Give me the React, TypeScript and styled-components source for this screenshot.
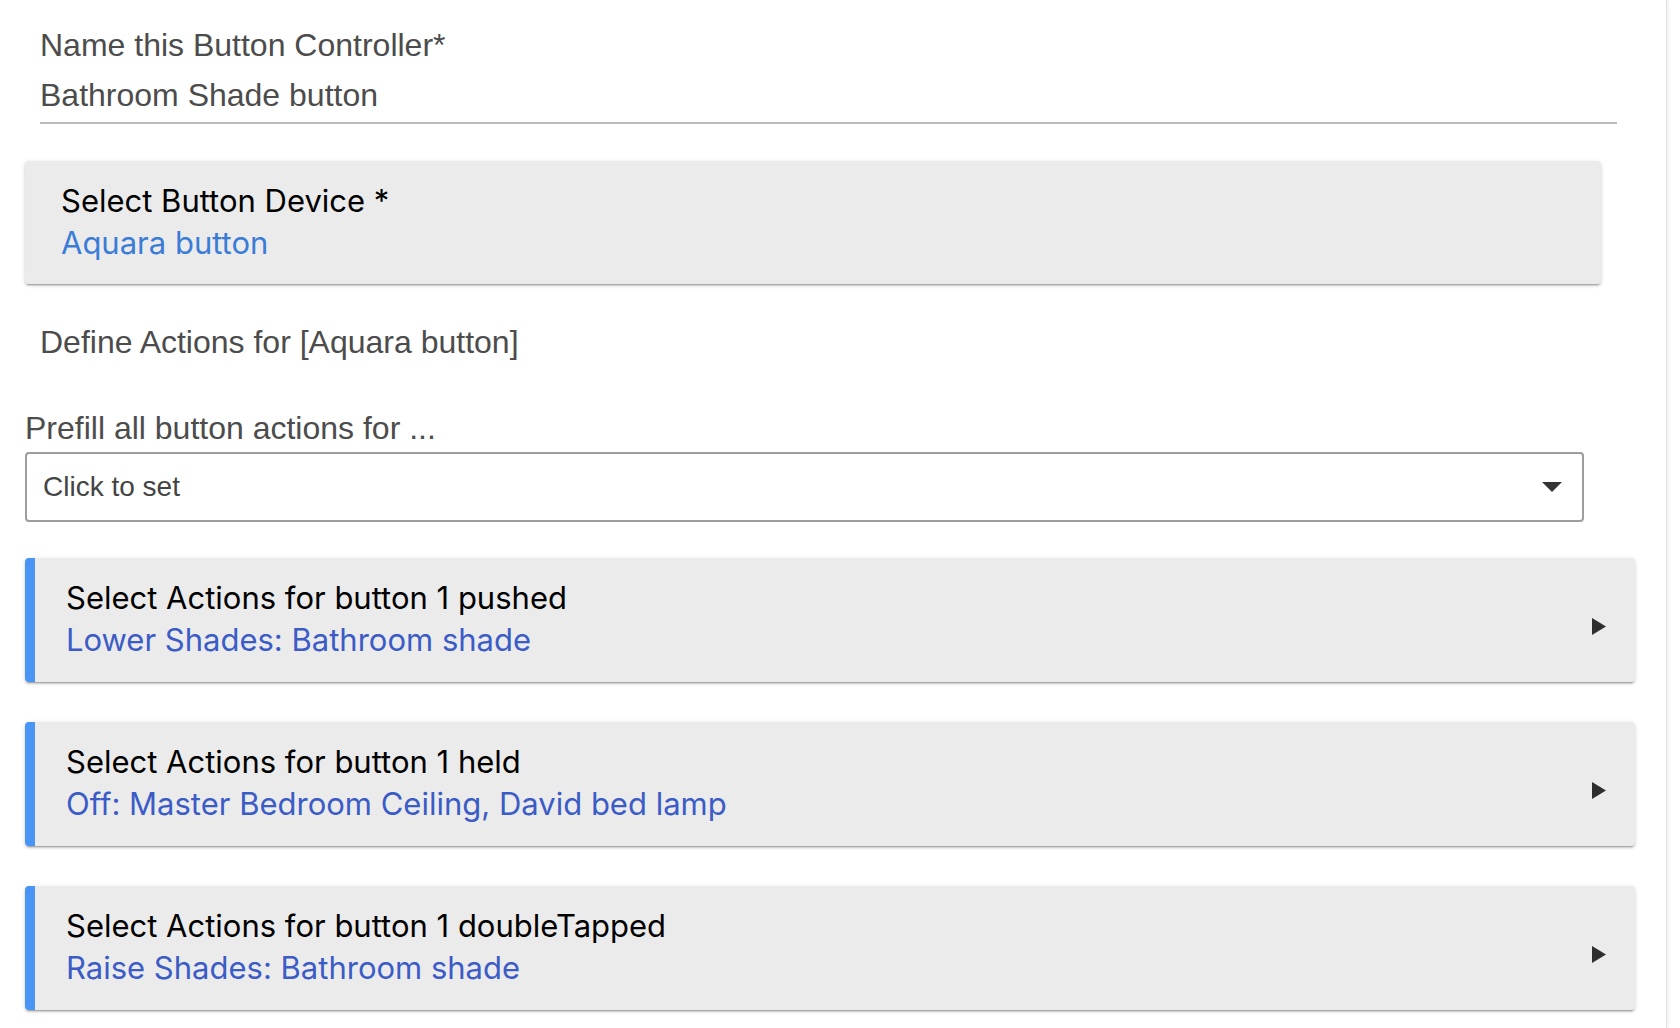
import styled, { createGlobalStyle } from "styled-components"

const GlobalStyle = createGlobalStyle`
  html, body {
    margin: 0;
    padding: 0;
    background: #ffffff;
  }
  body {
    font-family: "Liberation Sans", Arial, sans-serif;
  }
`

const actions = [
  { event: "pushed", value: "Lower Shades: Bathroom shade" },
  { event: "held", value: "Off: Master Bedroom Ceiling, David bed lamp" },
  { event: "doubleTapped", value: "Raise Shades: Bathroom shade" },
]

export default function App() {
  return (
    <>
      <GlobalStyle />
      <Page>
        <Panel>
          <NameField>
            <FieldLabel>Name this Button Controller*</FieldLabel>
            <FieldValue>Bathroom Shade button</FieldValue>
          </NameField>

          <DeviceCard>
            <CardTitle>Select Button Device *</CardTitle>
            <CardValue tone="light">Aquara button</CardValue>
          </DeviceCard>

          <SectionText>Define Actions for [Aquara button]</SectionText>

          <PrefillLabel>Prefill all button actions for ...</PrefillLabel>
          <SelectBox>
            <SelectText>Click to set</SelectText>
            <Caret viewBox="0 0 20 10">
              <path d="M0 0 L20 0 L10 10 Z" fill="#333" />
            </Caret>
          </SelectBox>

          <ActionList>
            {actions.map((a) => (
              <ActionCard key={a.event}>
                <ActionBody>
                  <CardTitle>Select Actions for button 1 {a.event}</CardTitle>
                  <CardValue tone="dark">{a.value}</CardValue>
                </ActionBody>
                <Arrow viewBox="0 0 14 17">
                  <path d="M0 0 L14 8.5 L0 17 Z" fill="#2e2e2e" />
                </Arrow>
              </ActionCard>
            ))}
          </ActionList>
        </Panel>
      </Page>
    </>
  )
}

const Page = styled.div`
  display: flex;
  min-height: 1028px;
  background: #fff;
`

const Panel = styled.main`
  width: 1667px;
  min-height: 1028px;
  padding: 22px 0 0 25px;
  box-sizing: border-box;
  border-right: 1px solid #e2e2e2;
  box-shadow: 2px 0 3px rgba(0, 0, 0, 0.06);
  display: flex;
  flex-direction: column;
  align-items: flex-start;
`

const NameField = styled.div`
  margin-left: 15px;
  width: 1577px;
  padding-bottom: 4px;
  border-bottom: 2px solid #bcbcbc;
`

const FieldLabel = styled.div`
  font-size: 32px;
  line-height: 46px;
  color: #4c4c4c;
`

const FieldValue = styled.div`
  margin-top: 4px;
  font-size: 32px;
  line-height: 46px;
  color: #4c4c4c;
`

const DeviceCard = styled.section`
  margin-top: 37px;
  width: 1576px;
  box-sizing: border-box;
  padding: 19px 36px 20px;
  background: #ebebeb;
  border-radius: 4px;
  box-shadow: 0 2px 2px rgba(0, 0, 0, 0.14), 0 3px 1px -2px rgba(0, 0, 0, 0.2),
    0 1px 5px rgba(0, 0, 0, 0.12);
`

const CardTitle = styled.div`
  font-family: Inter, "Noto Sans", sans-serif;
  font-size: 31px;
  line-height: 42px;
  color: #000;
`

const CardValue = styled.div<{ tone: "light" | "dark" }>`
  font-family: Inter, "Noto Sans", sans-serif;
  font-size: 31px;
  line-height: 42px;
  color: ${(p) => (p.tone === "light" ? "#3a7cd6" : "#3b5cc6")};
`

const SectionText = styled.div`
  margin: 35px 0 0 15px;
  font-size: 32px;
  line-height: 46px;
  color: #4c4c4c;
`

const PrefillLabel = styled.label`
  margin-top: 40px;
  font-size: 32px;
  line-height: 46px;
  color: #4c4c4c;
`

const SelectBox = styled.div`
  margin-top: 1px;
  width: 1559px;
  height: 70px;
  box-sizing: border-box;
  padding: 0 20px 0 16px;
  border: 2px solid #9d9d9d;
  border-radius: 4px;
  background: #fff;
  display: flex;
  align-items: center;
  justify-content: space-between;
`

const SelectText = styled.span`
  font-size: 28px;
  color: #444;
`

const Caret = styled.svg`
  width: 20px;
  height: 10px;
`

const ActionList = styled.div`
  margin-top: 36px;
  display: flex;
  flex-direction: column;
  gap: 40px;
`

const ActionCard = styled.section`
  width: 1610px;
  height: 124px;
  box-sizing: border-box;
  padding: 0 29px 0 31px;
  background: #ebebeb;
  border-left: 10px solid #4995f5;
  border-radius: 4px;
  box-shadow: 0 2px 2px rgba(0, 0, 0, 0.14), 0 3px 1px -2px rgba(0, 0, 0, 0.2),
    0 1px 5px rgba(0, 0, 0, 0.12);
  display: flex;
  align-items: center;
  justify-content: space-between;
`

const ActionBody = styled.div`
  padding-bottom: 2px;
`

const Arrow = styled.svg`
  width: 14px;
  height: 17px;
  margin-top: 12px;
`
